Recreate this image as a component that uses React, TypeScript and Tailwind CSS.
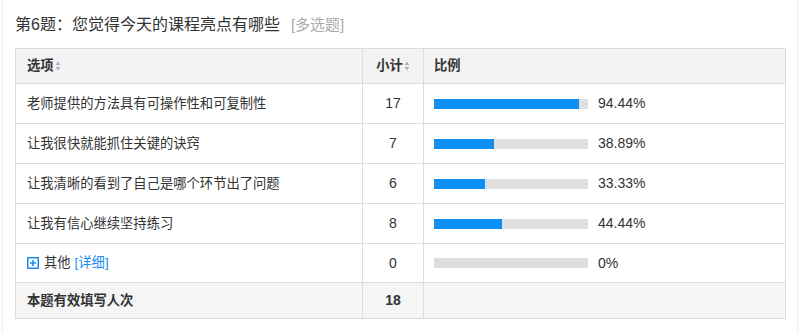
import React from "react";

const rows = [
  { label: "老师提供的方法具有可操作性和可复制性", count: 17, pct: 94.44, text: "94.44%" },
  { label: "让我很快就能抓住关键的诀窍", count: 7, pct: 38.89, text: "38.89%" },
  { label: "让我清晰的看到了自己是哪个环节出了问题", count: 6, pct: 33.33, text: "33.33%" },
  { label: "让我有信心继续坚持练习", count: 8, pct: 44.44, text: "44.44%" },
];

function SortIcon() {
  return (
    <svg width="6" height="10" viewBox="0 0 6 10" className="ml-[1px] inline-block">
      <path d="M3 0.5 L5.5 4 L0.5 4 Z" fill="#b0b0b0" />
      <path d="M3 9.5 L5.5 6 L0.5 6 Z" fill="#b0b0b0" />
    </svg>
  );
}

function PlusIcon() {
  return (
    <svg width="12" height="12" viewBox="0 0 12 12" className="mr-[5px] shrink-0">
      <rect x="0.75" y="0.75" width="10.5" height="10.5" fill="none" stroke="#1a8cf0" strokeWidth="1.5" />
      <path d="M6 3 V9 M3 6 H9" stroke="#1a8cf0" strokeWidth="1.6" />
    </svg>
  );
}

function Bar({ pct, text }: { pct: number; text: string }) {
  return (
    <div className="flex items-center">
      <div className="h-[10px] w-[154px] bg-[#dedede]">
        <div className="h-full bg-[#0b8ef5]" style={{ width: `${pct}%` }} />
      </div>
      <span className="ml-[10px] text-[14px] text-[#333]">{text}</span>
    </div>
  );
}

export default function App() {
  return (
    <div
      className="h-[332px] w-[800px] bg-white"
      style={{ fontFamily: '"Liberation Sans", "Noto Sans CJK SC", sans-serif' }}
    >
      <div className="ml-[2px] mr-[2px] h-full border-l border-r border-[#ececec] pl-[12px] pr-[10px]">
        <div className="flex items-baseline pt-[14px] leading-[22px]">
          <span className="text-[16px] text-[#333]">第6题：您觉得今天的课程亮点有哪些</span>
          <span className="ml-[11px] text-[15px] text-[#aaa]">[多选题]</span>
        </div>
        <table className="mt-[12px] w-[771px] border-collapse text-[13.3px] text-[#333]">
          <colgroup>
            <col className="w-[347px]" />
            <col className="w-[61px]" />
            <col />
          </colgroup>
          <thead>
            <tr className="h-[35px] bg-[#f3f3f3]">
              <th className="border border-[#dcdcdc] pl-[11px] text-left font-bold">
                <span className="inline-flex items-center">选项<SortIcon /></span>
              </th>
              <th className="border border-[#dcdcdc] text-center font-bold">
                <span className="inline-flex items-center">小计<SortIcon /></span>
              </th>
              <th className="border border-[#dcdcdc] pl-[10px] text-left font-bold">比例</th>
            </tr>
          </thead>
          <tbody>
            {rows.map((r) => (
              <tr key={r.label} className="h-[40px]">
                <td className="border border-[#dcdcdc] pl-[11px]">{r.label}</td>
                <td className="border border-[#dcdcdc] text-center text-[14px]">{r.count}</td>
                <td className="border border-[#dcdcdc] pl-[10px]">
                  <Bar pct={r.pct} text={r.text} />
                </td>
              </tr>
            ))}
            <tr className="h-[39px]">
              <td className="border border-[#dcdcdc] pl-[11px]">
                <span className="flex items-center">
                  <PlusIcon />
                  其他
                  <span className="ml-[4px] text-[#1a8cf0]">[详细]</span>
                </span>
              </td>
              <td className="border border-[#dcdcdc] text-center text-[14px]">0</td>
              <td className="border border-[#dcdcdc] pl-[10px]">
                <Bar pct={0} text="0%" />
              </td>
            </tr>
            <tr className="h-[36px] bg-[#f5f5f5]">
              <td className="border border-[#dcdcdc] pl-[11px] font-bold">本题有效填写人次</td>
              <td className="border border-[#dcdcdc] text-center text-[14px] font-bold">18</td>
              <td className="border border-[#dcdcdc]"></td>
            </tr>
          </tbody>
        </table>
      </div>
    </div>
  );
}
